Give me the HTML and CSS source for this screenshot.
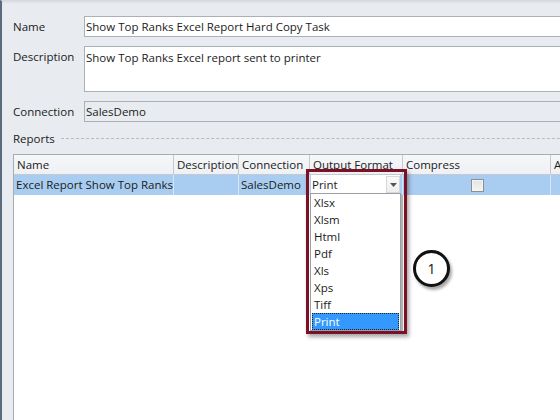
FILE: index.html
```html
<!DOCTYPE html>
<html lang="en">
<head>
    <meta charset="UTF-8">
    <title>Report Task</title>
    <link rel="stylesheet" href="styles.css">
</head>
<body>
    <div class="window">
        <div class="field">
            <label>Name</label>
            <div class="input">Show Top Ranks Excel Report Hard Copy Task</div>
        </div>
        <div class="field">
            <label>Description</label>
            <div class="input textarea">Show Top Ranks Excel report sent to printer</div>
        </div>
        <div class="field">
            <label>Connection</label>
            <div class="input readonly">SalesDemo</div>
        </div>
        <div class="group-title">
            <span>Reports</span>
            <span class="rule"></span>
        </div>

        <div class="grid">
            <div class="row head">
                <div class="cell">Name</div>
                <div class="cell">Description</div>
                <div class="cell">Connection</div>
                <div class="cell">Output Format</div>
                <div class="cell">Compress</div>
                <div class="cell">Active</div>
            </div>
            <div class="row selected">
                <div class="cell">Excel Report Show Top Ranks</div>
                <div class="cell"></div>
                <div class="cell">SalesDemo</div>
                <div class="cell format-cell">
                    <div class="combo">
                        <span class="combo-value">Print</span>
                        <span class="combo-button">
                            <svg width="7" height="4" viewBox="0 0 7 4"><path d="M0 0h7L3.5 4z" fill="#555"/></svg>
                        </span>
                    </div>
                    <ul class="dropdown">
                        <li>Xlsx</li>
                        <li>Xlsm</li>
                        <li>Html</li>
                        <li>Pdf</li>
                        <li>Xls</li>
                        <li>Xps</li>
                        <li>Tiff</li>
                        <li class="current">Print</li>
                    </ul>
                </div>
                <div class="cell check-cell"><span class="checkbox"></span></div>
                <div class="cell"></div>
            </div>
        </div>
    </div>

    <!-- annotation overlay -->
    <div class="callout-box"></div>
    <div class="callout-num">1</div>
</body>
</html>
```

FILE: styles.css
```css
* {
    box-sizing: border-box;
}
html, body {
    margin: 0;
    padding: 0;
}
body {
    width: 560px;
    height: 420px;
    overflow: hidden;
    position: relative;
    background-color: #e8ebef;
    font-family: "Open Sans", sans-serif;
    font-size: 11.5px;
    color: #1b1b1b;
}
.window {
    width: 640px;
    height: 420px;
    border-left: 2px solid #5b6b7e;
    border-top: 1px solid #d6dae0;
    box-shadow: inset 0 2px 3px -1px rgba(0, 0, 0, 0.08);
    padding: 15px 0 0 11px;
    display: flex;
    flex-direction: column;
}
.field {
    display: flex;
    margin-bottom: 9px;
}
.field label {
    width: 71px;
    line-height: 21px;
}
.input {
    flex: 1;
    height: 21px;
    line-height: 19px;
    padding: 0 1px;
    background: #fff;
    border: 1px solid #abb0b7;
}
.input.textarea {
    height: 46px;
    padding-top: 1px;
}
.input.readonly {
    background: #e8ebef;
}
.group-title {
    display: flex;
    align-items: center;
    height: 20px;
    margin-top: -3px;
}
.group-title .rule {
    flex: 1;
    margin-left: 6px;
    border-top: 1px dashed #b8bcc2;
}
.grid {
    flex: 1;
    margin-top: 6px;
    background: #fff;
    border-top: 1px solid #a7acb3;
    border-left: 1px solid #a7acb3;
}
.row {
    display: grid;
    grid-template-columns: 160px 65px 71px 93px 148px 80px;
    height: 20px;
}
.cell {
    line-height: 19px;
    padding-left: 2px;
    white-space: nowrap;
    overflow: hidden;
    border-right: 1px solid #c5cad0;
}
.head {
    background: linear-gradient(#f6f7f9, #eef0f3);
    border-bottom: 1px solid #c5cad0;
}
.head .cell {
    padding-left: 3px;
}
.selected {
    background: #a9cdf0;
}
.selected .cell {
    border-right-color: #d6e6f6;
}
.format-cell {
    position: relative;
    overflow: visible;
    padding: 0 2px 1px 1px;
    display: flex;
}
.combo {
    flex: 1;
    display: flex;
    background: #fff;
    height: 19px;
}
.combo-value {
    flex: 1;
    padding-left: 1px;
}
.combo-button {
    width: 14px;
    height: 17px;
    margin: 1px 0;
    border: 1px solid #d6d8dc;
    background: linear-gradient(#fafafa, #eeeeee);
    display: flex;
    align-items: center;
    justify-content: center;
}
.dropdown {
    position: absolute;
    left: 0;
    top: 18px;
    width: 91px;
    margin: 0;
    padding: 0 1px;
    list-style: none;
    background: #fff;
    border: 1px solid #9a9ea5;
    box-shadow: 2px 2px 1px rgba(0, 0, 0, 0.3);
    z-index: 2;
}
.dropdown li {
    height: 17px;
    line-height: 17px;
    padding-left: 2px;
}
.dropdown li.current {
    background: #3399ff;
    color: #fff;
    outline: 1px dotted #222;
    outline-offset: -1px;
}
.check-cell {
    display: flex;
    align-items: center;
    justify-content: center;
}
.checkbox {
    width: 13px;
    height: 13px;
    border: 1px solid #8e8f8f;
    background: linear-gradient(#e4e4e4, #f4f4f4);
    box-shadow: inset 0 0 0 1px #f4f4f4;
}
.callout-box {
    position: absolute;
    left: 306px;
    top: 169px;
    width: 101px;
    height: 165px;
    border: 3px solid #7b1126;
    box-shadow: 2px 3px 4px rgba(0, 0, 0, 0.35);
    z-index: 3;
}
.callout-num {
    position: absolute;
    left: 413px;
    top: 250px;
    width: 37px;
    height: 37px;
    border: 3px solid #111;
    border-radius: 50%;
    background: #fff;
    box-shadow: 2px 3px 3px rgba(0, 0, 0, 0.35);
    font-size: 14px;
    line-height: 31px;
    text-align: center;
    color: #111;
}
```
